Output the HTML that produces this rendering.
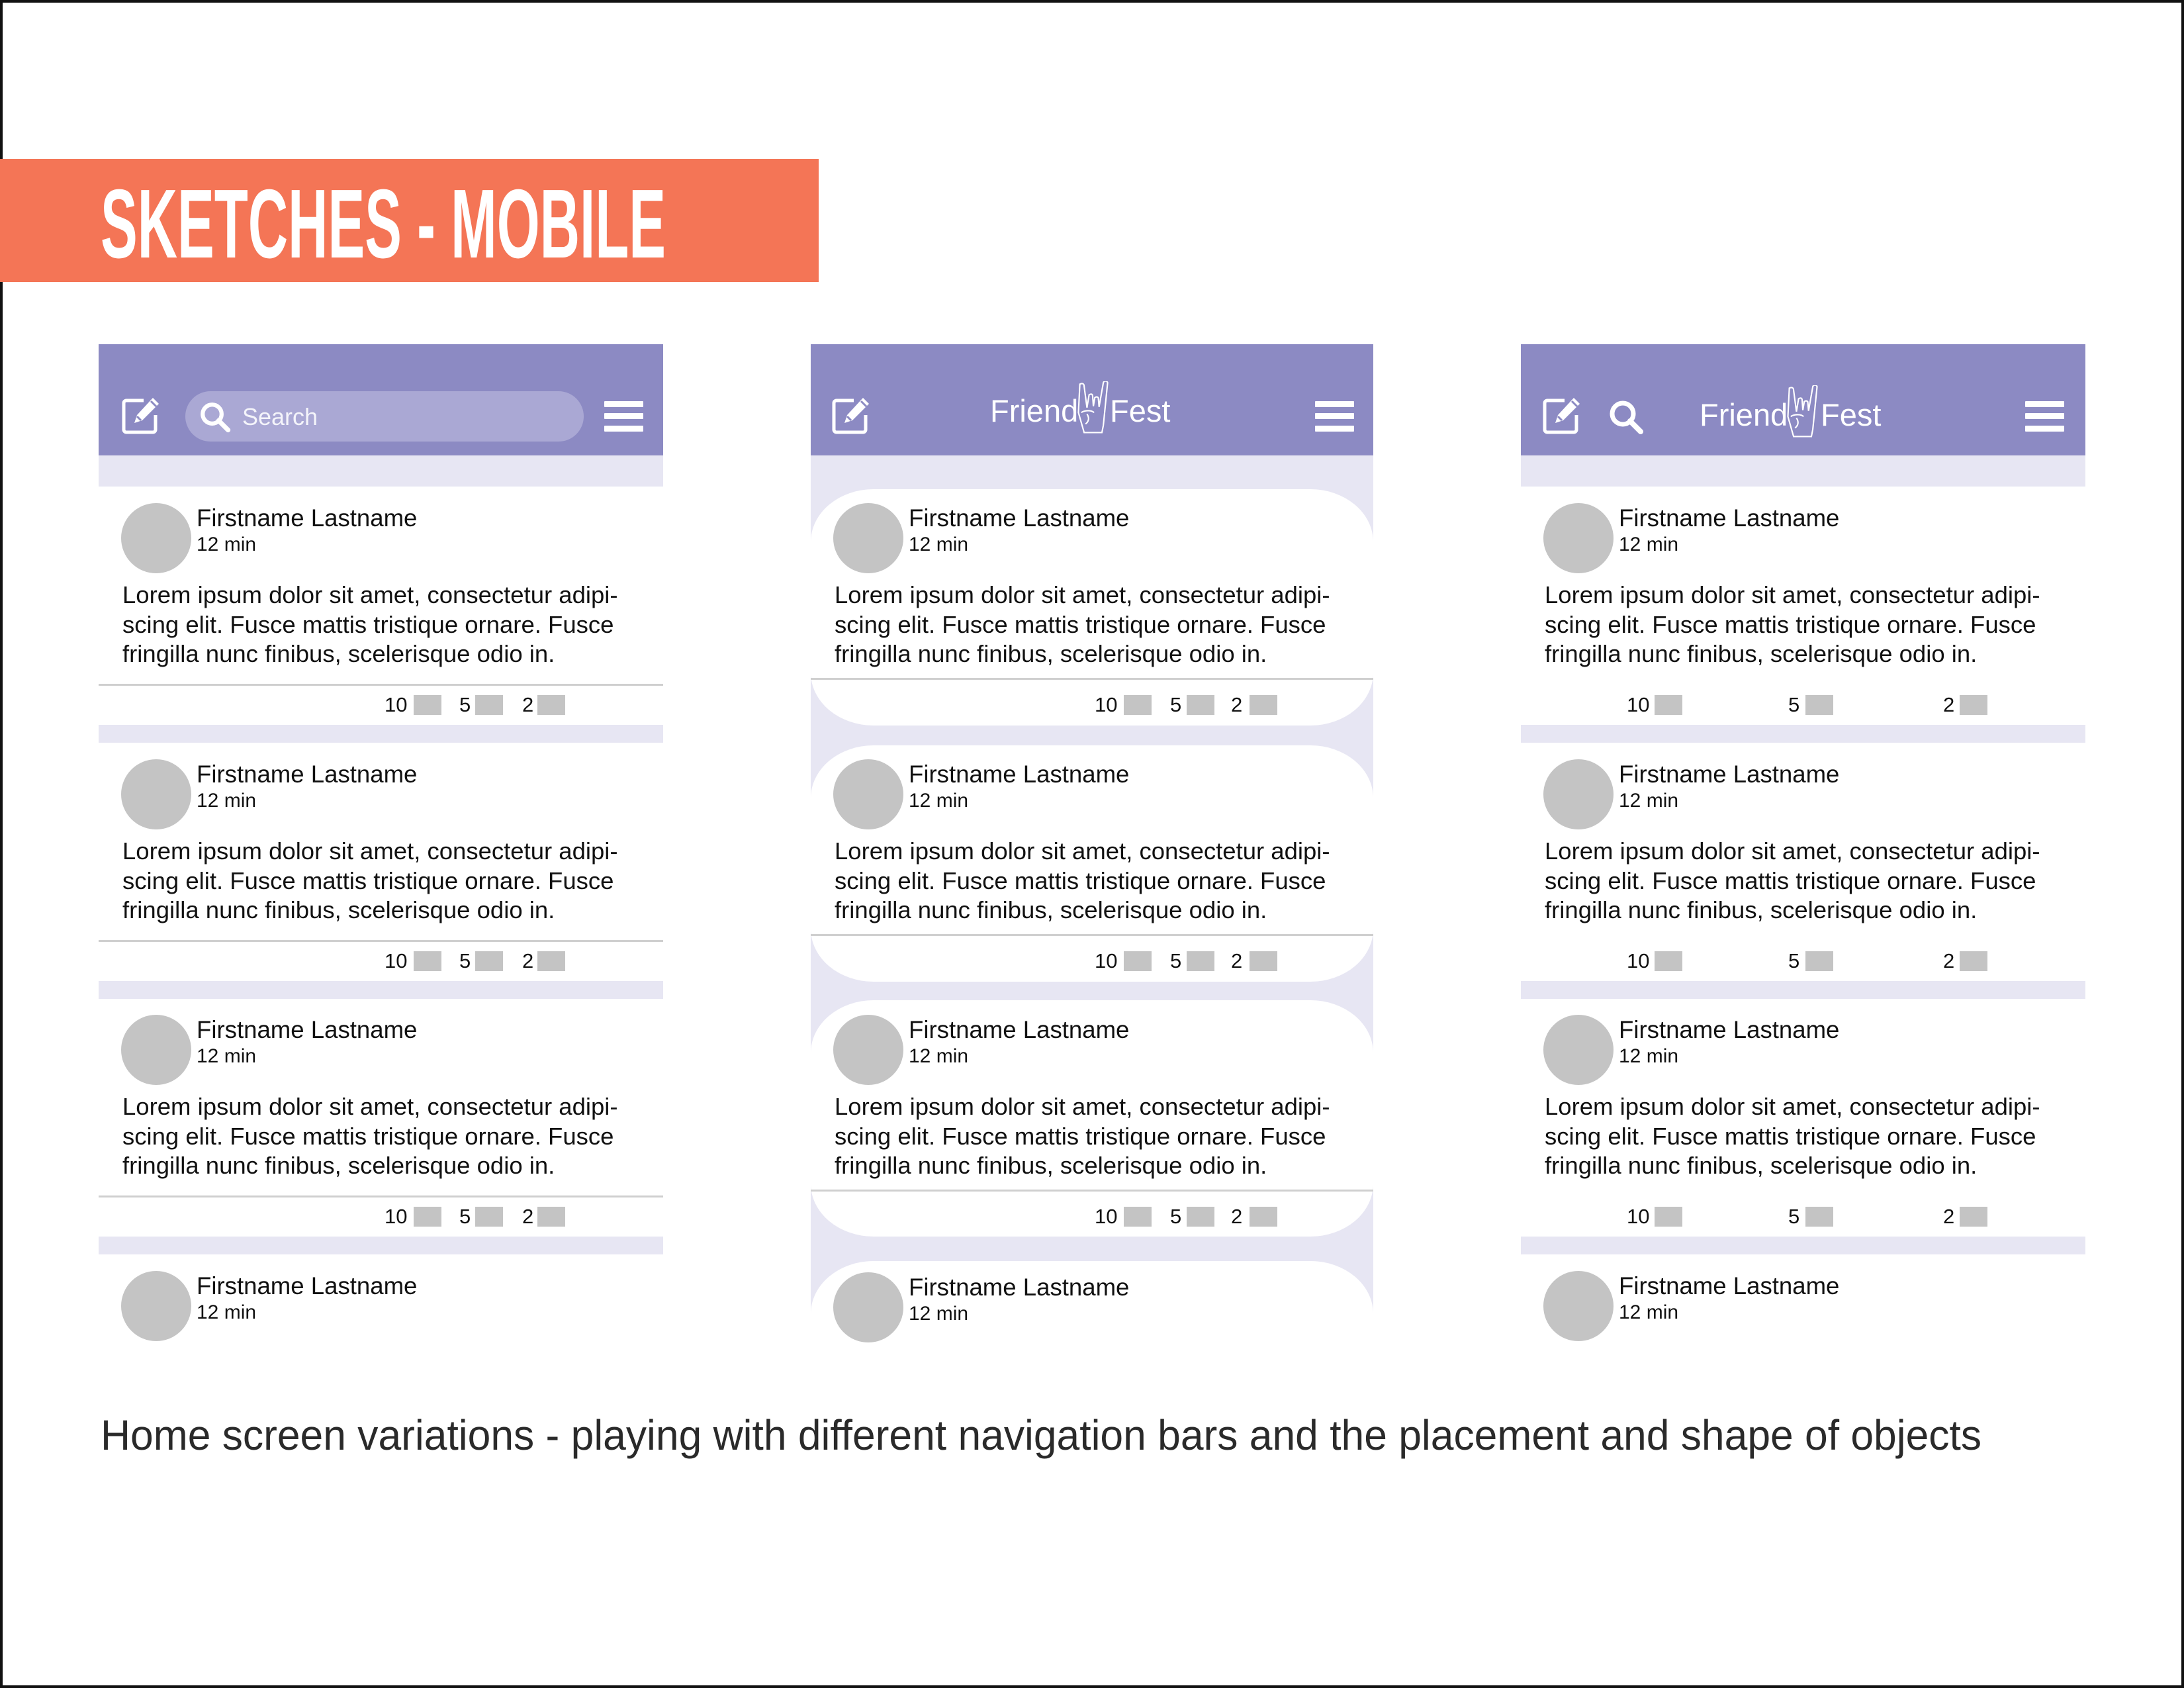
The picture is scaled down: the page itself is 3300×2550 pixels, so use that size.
<!DOCTYPE html>
<html><head><meta charset="utf-8"><style>
*{margin:0;padding:0;box-sizing:border-box}
body{width:3300px;height:2550px;background:#fff;position:relative;overflow:hidden;font-family:"Liberation Sans",Arial,sans-serif;color:#111}
.frame{position:absolute;left:0;top:0;width:3300px;height:2550px;border:4px solid #111}
.abs{position:absolute}
.hdr{position:absolute;top:520px;height:168px;width:853px;background:#8C8AC3}
.strip{position:absolute;top:688px;height:47px;width:853px;background:#E7E6F3}
.post{position:absolute;width:853px;height:360px}
.av{position:absolute;left:34px;top:25px;width:106px;height:106px;border-radius:50%;background:#C4C4C4}
.nm{position:absolute;left:148px;top:26px;font-size:36.6px;line-height:44px;white-space:nowrap}
.tm{position:absolute;left:148px;top:70px;font-size:30px;line-height:36px}
.lo{position:absolute;left:36px;top:142px;font-size:36.5px;line-height:44.6px;white-space:nowrap}
.ln{position:absolute;left:0;top:298px;width:853px;height:3px;background:#CFCFCF}
.n{position:absolute;top:312px;font-size:31px;line-height:36px}
.b{position:absolute;top:315px;width:42px;height:30px;background:#C4C4C4}
.sep{position:absolute;height:27px;width:853px;background:#E7E6F3}
.card{position:absolute;width:850px;height:357px;background:#fff;border-radius:95px/80px}
.burger{position:absolute;width:59px;height:46px}
.burger i{position:absolute;left:0;width:59px;height:9px;background:#fff;border-radius:1px}
.logo{position:absolute;color:#fff;font-size:47px;line-height:56px;white-space:nowrap}
</style></head><body>
<div class="frame"></div>

<div class="abs" style="left:0;top:240px;width:1237px;height:186px;background:#F47556"></div>
<svg class="abs" style="left:0;top:240px" width="1237" height="186"><text x="152" y="149" textLength="854" lengthAdjust="spacingAndGlyphs" font-family="Liberation Sans Narrow, Liberation Sans, sans-serif" font-weight="bold" font-size="148" fill="#fff">SKETCHES - MOBILE</text></svg>

<svg width="0" height="0" style="position:absolute">
<defs>
<symbol id="ed" viewBox="0 0 64 64"><path d="M36 8H10a4 4 0 0 0-4 4v40a4 4 0 0 0 4 4h40a4 4 0 0 0 4-4V30" fill="none" stroke="#fff" stroke-width="5"/><path d="M50 4l9 9-25 25-12 4 4-12z" fill="#fff"/><path d="M26 32l6 6" stroke="#8C8AC3" stroke-width="3"/><path d="M47 9l8 8" stroke="#8C8AC3" stroke-width="3"/></symbol>
<symbol id="sr" viewBox="0 0 56 56"><circle cx="23" cy="23" r="16" fill="none" stroke="#fff" stroke-width="7"/><path d="M34 34l16 16" stroke="#fff" stroke-width="8" stroke-linecap="round"/></symbol>
<symbol id="hd" viewBox="0 0 52 80"><path d="M8 4c4-2 6 0 6 3l4 30 3-18c3-2 5-1 5 2l1 14 2-12c2-2 5-1 5 1l1 12 6-34c1-3 5-3 6 0l-6 60-2 10H14L6 44z M10 44c4-3 14-4 18 0M16 60c4-3 6-8 2-14" fill="none" stroke="#fff" stroke-width="2"/></symbol>
</defs></svg>

<!-- Panel 1 -->
<div class="hdr" style="left:149px"></div>
<div class="strip" style="left:149px"></div>
<svg class="abs" style="left:181px;top:597px" width="64" height="64"><use href="#ed"/></svg>
<div class="abs" style="left:280px;top:591px;width:602px;height:76px;border-radius:38px;background:#AAA8D4"></div>
<svg class="abs" style="left:300px;top:605px" width="50" height="50"><use href="#sr"/></svg>
<div class="abs" style="left:366px;top:609px;font-size:36px;line-height:42px;color:#f4f4fa">Search</div>
<div class="burger" style="left:913px;top:606px"><i style="top:0"></i><i style="top:18px"></i><i style="top:37px"></i></div>

<!-- Panel 2 -->
<div class="hdr" style="left:1225px;width:850px"></div>
<div class="abs" style="left:1225px;top:688px;width:850px;height:1343px;background:#E7E6F3"></div>
<svg class="abs" style="left:1254px;top:597px" width="64" height="64"><use href="#ed"/></svg>
<div class="logo" style="left:1496px;top:593px">Friend</div>
<svg class="abs" style="left:1623px;top:576px" width="56" height="86"><use href="#hd"/></svg>
<div class="logo" style="left:1677px;top:593px">Fest</div>
<div class="burger" style="left:1987px;top:606px"><i style="top:0"></i><i style="top:18px"></i><i style="top:37px"></i></div>
<div class="card" style="left:1225px;top:739px"></div>
<div class="card" style="left:1225px;top:1126px"></div>
<div class="card" style="left:1225px;top:1511px"></div>
<div class="card" style="left:1225px;top:1905px;height:126px;border-radius:95px 95px 0 0/80px 80px 0 0"></div>

<!-- Panel 3 -->
<div class="hdr" style="left:2298px"></div>
<div class="strip" style="left:2298px"></div>
<svg class="abs" style="left:2328px;top:597px" width="64" height="64"><use href="#ed"/></svg>
<svg class="abs" style="left:2429px;top:602px" width="56" height="56"><use href="#sr"/></svg>
<div class="logo" style="left:2568px;top:599px">Friend</div>
<svg class="abs" style="left:2695px;top:582px" width="56" height="86"><use href="#hd"/></svg>
<div class="logo" style="left:2751px;top:599px">Fest</div>
<div class="burger" style="left:3060px;top:606px"><i style="top:0"></i><i style="top:18px"></i><i style="top:37px"></i></div>

<div class="sep" style="left:149px;top:1095px"></div>
<div class="sep" style="left:149px;top:1482px"></div>
<div class="sep" style="left:149px;top:1868px"></div>
<div class="sep" style="left:2298px;top:1095px"></div>
<div class="sep" style="left:2298px;top:1482px"></div>
<div class="sep" style="left:2298px;top:1868px"></div>

<!-- posts panel 1 -->
<div class="post" style="left:149px;top:735px"><div class="av"></div><div class="nm">Firstname Lastname</div><div class="tm">12 min</div><div class="lo">Lorem ipsum dolor sit amet, consectetur adipi-<br>scing elit. Fusce mattis tristique ornare. Fusce<br>fringilla nunc finibus, scelerisque odio in.</div><div class="ln"></div><div class="n" style="left:432px">10</div><div class="b" style="left:476px"></div><div class="n" style="left:545px">5</div><div class="b" style="left:569px"></div><div class="n" style="left:640px">2</div><div class="b" style="left:663px"></div></div>
<div class="post" style="left:149px;top:1122px"><div class="av"></div><div class="nm">Firstname Lastname</div><div class="tm">12 min</div><div class="lo">Lorem ipsum dolor sit amet, consectetur adipi-<br>scing elit. Fusce mattis tristique ornare. Fusce<br>fringilla nunc finibus, scelerisque odio in.</div><div class="ln"></div><div class="n" style="left:432px">10</div><div class="b" style="left:476px"></div><div class="n" style="left:545px">5</div><div class="b" style="left:569px"></div><div class="n" style="left:640px">2</div><div class="b" style="left:663px"></div></div>
<div class="post" style="left:149px;top:1508px"><div class="av"></div><div class="nm">Firstname Lastname</div><div class="tm">12 min</div><div class="lo">Lorem ipsum dolor sit amet, consectetur adipi-<br>scing elit. Fusce mattis tristique ornare. Fusce<br>fringilla nunc finibus, scelerisque odio in.</div><div class="ln"></div><div class="n" style="left:432px">10</div><div class="b" style="left:476px"></div><div class="n" style="left:545px">5</div><div class="b" style="left:569px"></div><div class="n" style="left:640px">2</div><div class="b" style="left:663px"></div></div>
<div class="post" style="left:149px;top:1895px;height:136px;overflow:hidden"><div class="av"></div><div class="nm">Firstname Lastname</div><div class="tm">12 min</div></div>

<!-- posts panel 2 -->
<div class="post" style="left:1225px;top:735px"><div class="av"></div><div class="nm">Firstname Lastname</div><div class="tm">12 min</div><div class="lo">Lorem ipsum dolor sit amet, consectetur adipi-<br>scing elit. Fusce mattis tristique ornare. Fusce<br>fringilla nunc finibus, scelerisque odio in.</div><div class="ln" style="top:289px;width:850px"></div><div class="n" style="left:429px">10</div><div class="b" style="left:473px"></div><div class="n" style="left:543px">5</div><div class="b" style="left:568px"></div><div class="n" style="left:635px">2</div><div class="b" style="left:663px"></div></div>
<div class="post" style="left:1225px;top:1122px"><div class="av"></div><div class="nm">Firstname Lastname</div><div class="tm">12 min</div><div class="lo">Lorem ipsum dolor sit amet, consectetur adipi-<br>scing elit. Fusce mattis tristique ornare. Fusce<br>fringilla nunc finibus, scelerisque odio in.</div><div class="ln" style="top:289px;width:850px"></div><div class="n" style="left:429px">10</div><div class="b" style="left:473px"></div><div class="n" style="left:543px">5</div><div class="b" style="left:568px"></div><div class="n" style="left:635px">2</div><div class="b" style="left:663px"></div></div>
<div class="post" style="left:1225px;top:1508px"><div class="av"></div><div class="nm">Firstname Lastname</div><div class="tm">12 min</div><div class="lo">Lorem ipsum dolor sit amet, consectetur adipi-<br>scing elit. Fusce mattis tristique ornare. Fusce<br>fringilla nunc finibus, scelerisque odio in.</div><div class="ln" style="top:289px;width:850px"></div><div class="n" style="left:429px">10</div><div class="b" style="left:473px"></div><div class="n" style="left:543px">5</div><div class="b" style="left:568px"></div><div class="n" style="left:635px">2</div><div class="b" style="left:663px"></div></div>
<div class="post" style="left:1225px;top:1897px;height:134px;overflow:hidden"><div class="av"></div><div class="nm">Firstname Lastname</div><div class="tm">12 min</div></div>

<!-- posts panel 3 -->
<div class="post" style="left:2298px;top:735px"><div class="av"></div><div class="nm">Firstname Lastname</div><div class="tm">12 min</div><div class="lo">Lorem ipsum dolor sit amet, consectetur adipi-<br>scing elit. Fusce mattis tristique ornare. Fusce<br>fringilla nunc finibus, scelerisque odio in.</div><div class="n" style="left:160px">10</div><div class="b" style="left:202px"></div><div class="n" style="left:404px">5</div><div class="b" style="left:430px"></div><div class="n" style="left:638px">2</div><div class="b" style="left:663px"></div></div>
<div class="post" style="left:2298px;top:1122px"><div class="av"></div><div class="nm">Firstname Lastname</div><div class="tm">12 min</div><div class="lo">Lorem ipsum dolor sit amet, consectetur adipi-<br>scing elit. Fusce mattis tristique ornare. Fusce<br>fringilla nunc finibus, scelerisque odio in.</div><div class="n" style="left:160px">10</div><div class="b" style="left:202px"></div><div class="n" style="left:404px">5</div><div class="b" style="left:430px"></div><div class="n" style="left:638px">2</div><div class="b" style="left:663px"></div></div>
<div class="post" style="left:2298px;top:1508px"><div class="av"></div><div class="nm">Firstname Lastname</div><div class="tm">12 min</div><div class="lo">Lorem ipsum dolor sit amet, consectetur adipi-<br>scing elit. Fusce mattis tristique ornare. Fusce<br>fringilla nunc finibus, scelerisque odio in.</div><div class="n" style="left:160px">10</div><div class="b" style="left:202px"></div><div class="n" style="left:404px">5</div><div class="b" style="left:430px"></div><div class="n" style="left:638px">2</div><div class="b" style="left:663px"></div></div>
<div class="post" style="left:2298px;top:1895px;height:136px;overflow:hidden"><div class="av"></div><div class="nm">Firstname Lastname</div><div class="tm">12 min</div></div>

<svg class="abs" style="left:0;top:2110px" width="3300" height="120"><text x="152" y="80" textLength="2842" lengthAdjust="spacingAndGlyphs" font-family="Liberation Sans, sans-serif" font-size="64" fill="#2a2a2a">Home screen variations - playing with different navigation bars and the placement and shape of objects</text></svg>
</body></html>
